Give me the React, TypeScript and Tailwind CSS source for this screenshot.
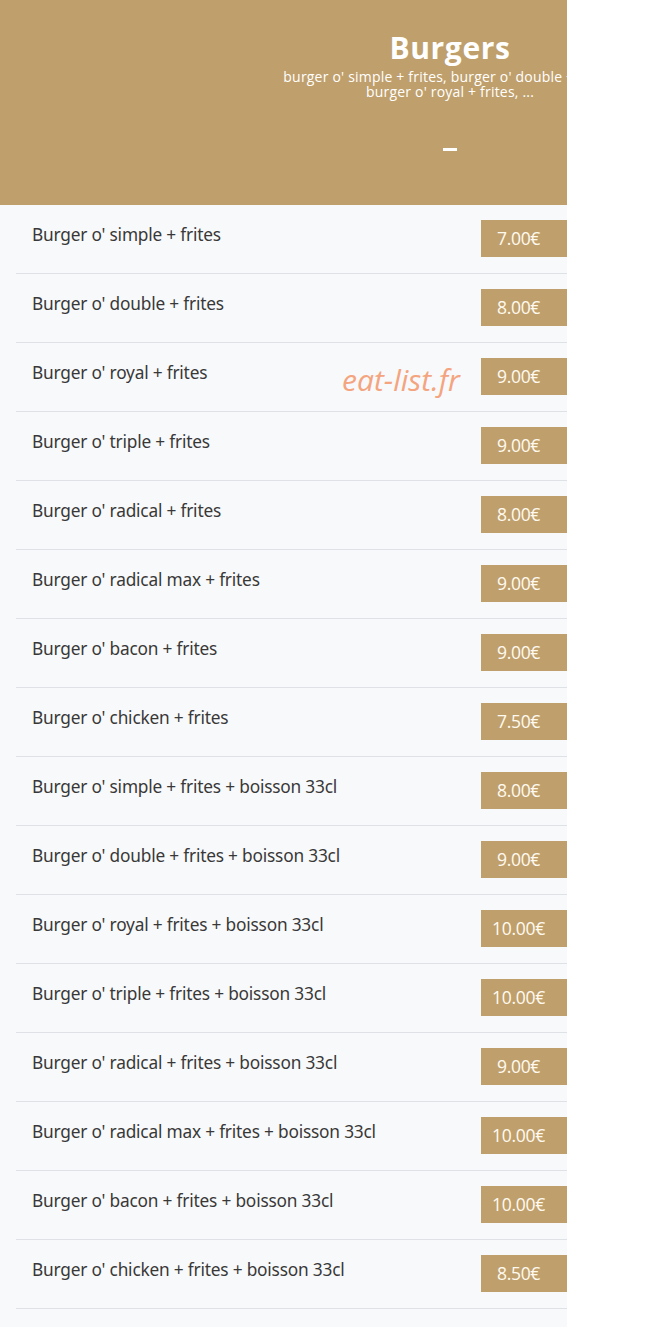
import React from "react";

const items: [string, string][] = [
  ["Burger o' simple + frites", "7.00€"],
  ["Burger o' double + frites", "8.00€"],
  ["Burger o' royal + frites", "9.00€"],
  ["Burger o' triple + frites", "9.00€"],
  ["Burger o' radical + frites", "8.00€"],
  ["Burger o' radical max + frites", "9.00€"],
  ["Burger o' bacon + frites", "9.00€"],
  ["Burger o' chicken + frites", "7.50€"],
  ["Burger o' simple + frites + boisson 33cl", "8.00€"],
  ["Burger o' double + frites + boisson 33cl", "9.00€"],
  ["Burger o' royal + frites + boisson 33cl", "10.00€"],
  ["Burger o' triple + frites + boisson 33cl", "10.00€"],
  ["Burger o' radical + frites + boisson 33cl", "9.00€"],
  ["Burger o' radical max + frites + boisson 33cl", "10.00€"],
  ["Burger o' bacon + frites + boisson 33cl", "10.00€"],
  ["Burger o' chicken + frites + boisson 33cl", "8.50€"],
];

export default function App() {
  return (
    <div className="relative w-[655px] min-h-[1327px] bg-white">
      <div className="w-[567px] overflow-hidden">
        <div className="h-[205px] bg-[#bfa06c] flex justify-end">
          <div className="w-[234px] flex flex-col items-center pt-[31px]">
            <div className="text-white font-bold text-[30px] leading-[34px] tracking-[0.6px] font-['Open_Sans',sans-serif]">
              Burgers
            </div>
            <div className="mt-[4px] whitespace-nowrap text-white text-[14px] leading-[15px] tracking-[0.2px] font-['Open_Sans',sans-serif] text-center">
              burger o' simple + frites, burger o' double + frites,
              <br />
              burger o' royal + frites, ...
            </div>
            <div className="mt-[49px] w-[14px] h-[3px] bg-white" />
          </div>
        </div>
        <div className="bg-[#f8f9fa] pl-4 min-h-[1122px]">
          {items.map(([name, price], i) => (
            <div
              key={i}
              className="h-[69px] border-b border-[#dee2e6] flex justify-between items-start pt-[15px] pl-4"
            >
              <div className="mt-[2px] text-[17.3px] leading-[26px] text-[#383838] font-['Noto_Sans',sans-serif] tracking-[-0.2px]">
                {name}
              </div>
              <div className="w-[86px] h-[37px] bg-[#bfa06c] flex items-center justify-center pr-[11px] text-[#fffaf0] text-[17.5px] font-['Open_Sans',sans-serif] tracking-[-0.3px]">
                {price}
              </div>
            </div>
          ))}
        </div>
      </div>
      <div className="absolute left-[342px] top-[360px] text-[30px] italic text-[#f4a47f] font-['Open_Sans',sans-serif] leading-[40px]">
        eat-list.fr
      </div>
    </div>
  );
}
